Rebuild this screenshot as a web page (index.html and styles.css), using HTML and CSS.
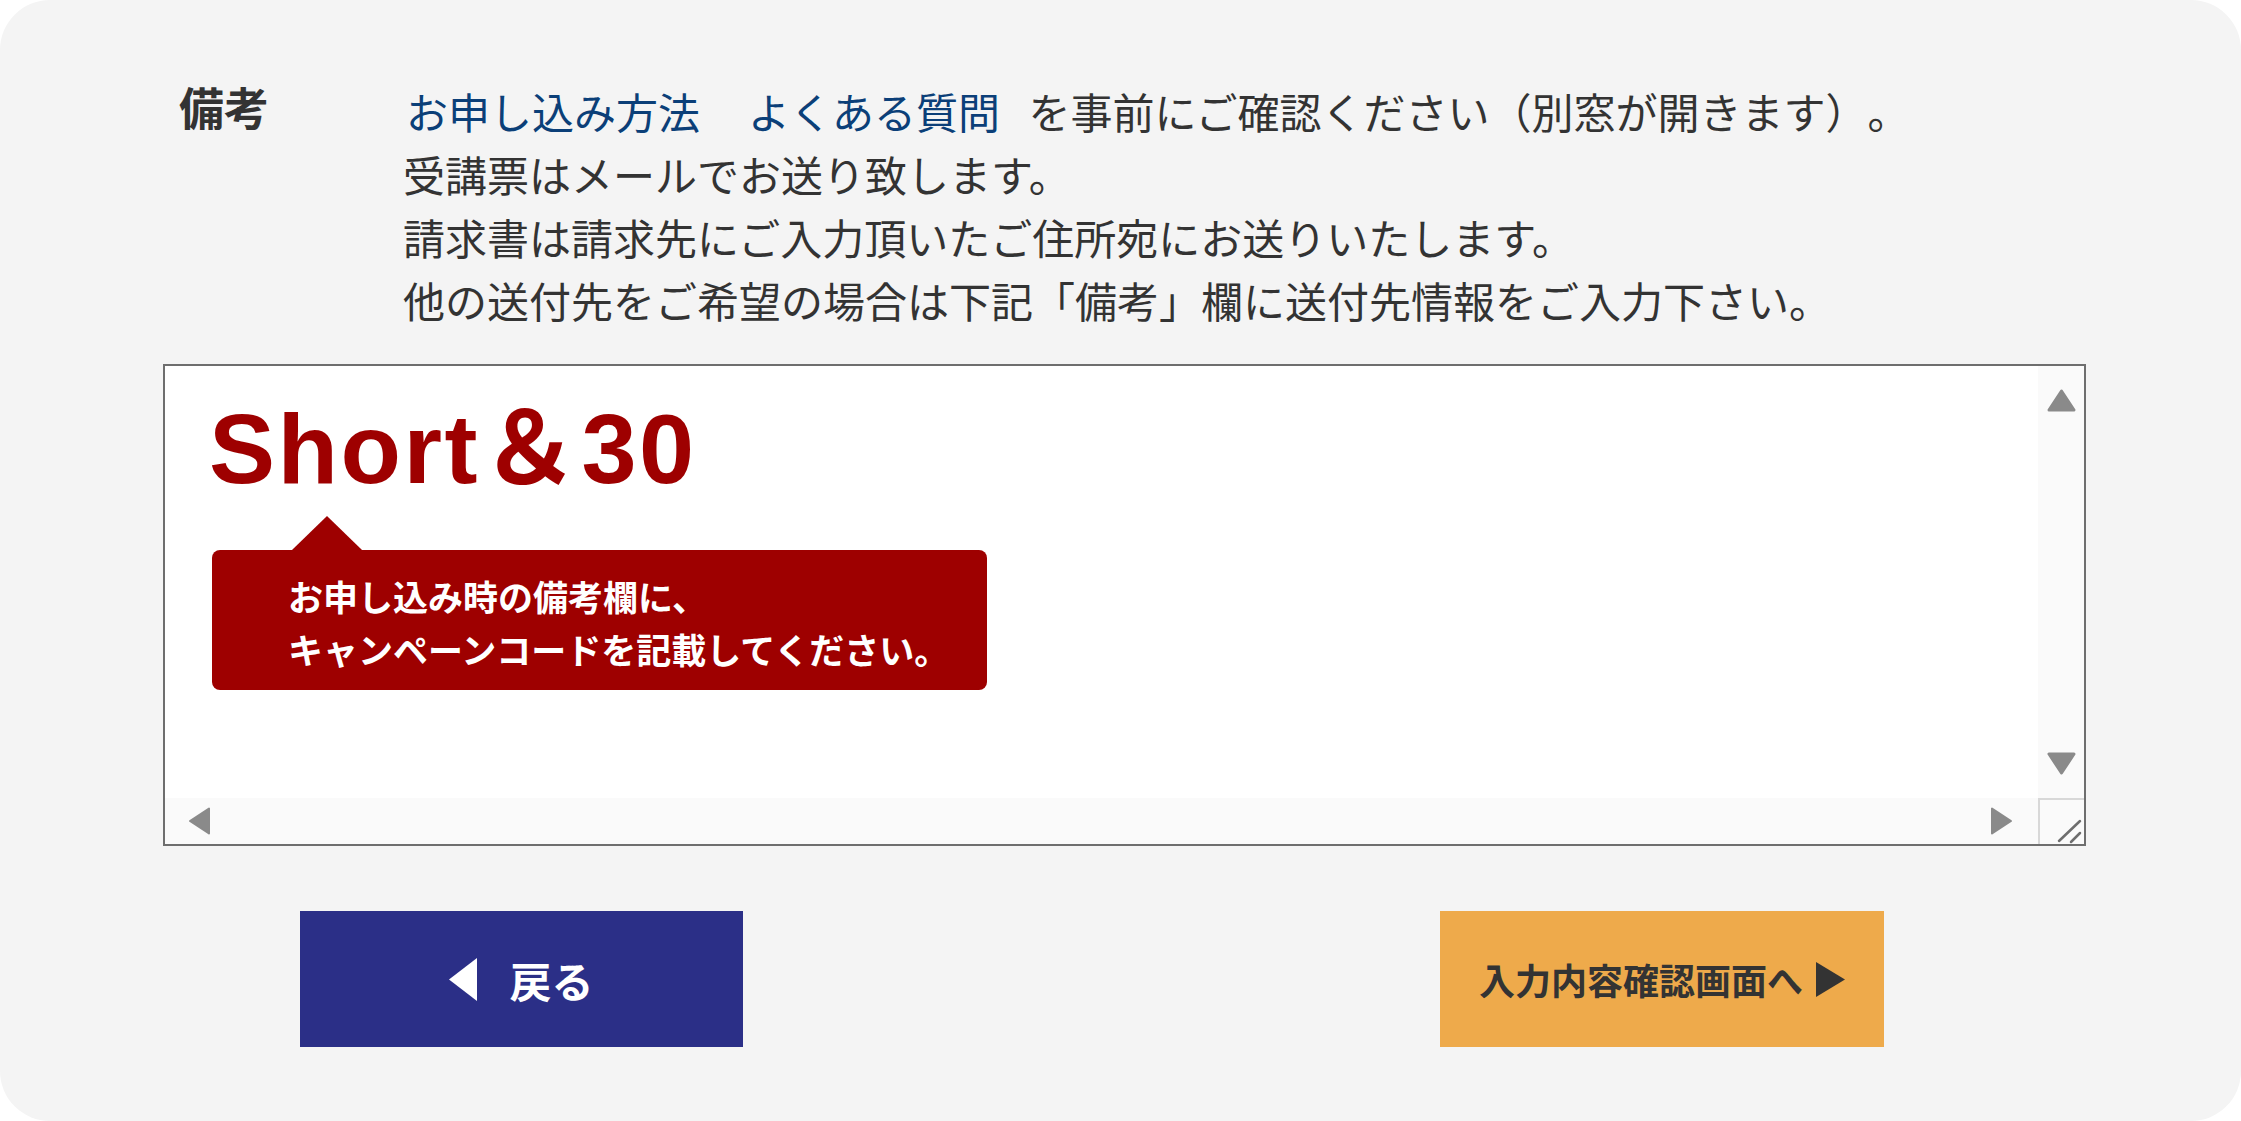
FILE: index.html
```html
<!DOCTYPE html>
<html lang="ja">
<head>
<meta charset="utf-8">
<title>備考</title>
<link rel="stylesheet" href="styles.css">
</head>
<body>
<div class="card">
  <div class="note-row">
    <div class="note-label">備考</div>
    <div class="note-text">
      <p><a class="link" href="#">お申し込み方法</a>　<a class="link link-last" href="#">よくある質問</a> を事前にご確認ください（別窓が開きます）。</p>
      <p>受講票はメールでお送り致します。</p>
      <p>請求書は請求先にご入力頂いたご住所宛にお送りいたします。</p>
      <p>他の送付先をご希望の場合は下記「備考」欄に送付先情報をご入力下さい。</p>
    </div>
  </div>

  <div class="memo-box">
    <div class="memo-content">
      <div class="campaign-title">Short＆30</div>
      <div class="tooltip">お申し込み時の備考欄に、<br>キャンペーンコードを記載してください。</div>
    </div>
    <div class="vscroll">
      <svg width="29" height="23" viewBox="0 0 29 23"><polygon points="14.5,2 27,21 2,21" fill="#8a8a8a" stroke="#8a8a8a" stroke-width="3" stroke-linejoin="round"/></svg>
      <svg width="29" height="23" viewBox="0 0 29 23"><polygon points="2,2 27,2 14.5,21" fill="#8a8a8a" stroke="#8a8a8a" stroke-width="3" stroke-linejoin="round"/></svg>
    </div>
    <div class="hscroll">
      <svg width="22" height="28" viewBox="0 0 22 28"><polygon points="2,14 21,1.5 21,26.5" fill="#8a8a8a" stroke="#8a8a8a" stroke-width="2" stroke-linejoin="round"/></svg>
      <svg width="22" height="28" viewBox="0 0 22 28"><polygon points="20,14 1,1.5 1,26.5" fill="#8a8a8a" stroke="#8a8a8a" stroke-width="2" stroke-linejoin="round"/></svg>
    </div>
    <div class="corner">
      <svg width="44" height="44" viewBox="0 0 44 44"><line x1="19" y1="41" x2="40" y2="21" stroke="#6e6e6e" stroke-width="2.5" stroke-linecap="round"/><line x1="31" y1="42" x2="40" y2="33" stroke="#6e6e6e" stroke-width="2.5" stroke-linecap="round"/></svg>
    </div>
  </div>

  <div class="actions">
    <a class="btn btn-back" href="#"><svg width="28" height="43" viewBox="0 0 28 43"><polygon points="0,21.5 28,0 28,43" fill="#ffffff"/></svg><span>戻る</span></a>
    <a class="btn btn-next" href="#"><span>入力内容確認画面へ</span><svg width="29" height="35" viewBox="0 0 29 35"><polygon points="0,0 29,17.5 0,35" fill="#333333"/></svg></a>
  </div>
</div>
</body>
</html>
```

FILE: styles.css
```css
html, body {
  margin: 0;
  padding: 0;
  background: #ffffff;
}

body {
  font-family: "Noto Sans CJK JP", "Noto Sans", sans-serif;
  color: #333333;
  text-spacing-trim: space-all;
}

.card {
  box-sizing: border-box;
  height: 1121px;
  background: #f4f4f4;
  border-radius: 50px;
  padding: 79px 155px 0 163px;
  overflow: hidden;
}

.note-row {
  display: flex;
}

.note-label {
  box-sizing: border-box;
  width: 240px;
  flex: none;
  padding-left: 16px;
  margin-top: -4px;
  font-size: 45px;
  font-weight: 700;
  line-height: 63px;
  color: #333333;
}

.note-text {
  font-size: 42px;
  line-height: 63px;
  color: #333333;
  white-space: nowrap;
}

.note-text p {
  margin: 0;
}

.link {
  color: #0b3f78;
  text-decoration: none;
  padding: 0 3px;
}

.link-last {
  padding-right: 19px;
}

.memo-box {
  box-sizing: border-box;
  margin-top: 33px;
  width: 1923px;
  height: 482px;
  border: 2px solid #6e6e6e;
  background: #ffffff;
  display: grid;
  grid-template-columns: 1fr 46px;
  grid-template-rows: 1fr 46px;
}

.memo-content {
  padding: 33px 0 0 47px;
}

.campaign-title {
  margin-left: -3px;
  font-family: "Liberation Sans", "Noto Sans CJK JP", sans-serif;
  font-size: 99px;
  line-height: 99px;
  font-weight: 700;
  letter-spacing: 2.5px;
  color: #9e0000;
}

.tooltip {
  position: relative;
  box-sizing: border-box;
  margin-top: 52px;
  width: 775px;
  padding: 19px 0 15px 76px;
  background: #9e0000;
  color: #ffffff;
  font-size: 35px;
  font-weight: 700;
  line-height: 53px;
  border-radius: 8px;
  white-space: nowrap;
}

.tooltip::before {
  content: "";
  position: absolute;
  left: 80px;
  top: -34px;
  border-left: 35px solid transparent;
  border-right: 35px solid transparent;
  border-bottom: 34px solid #9e0000;
}

.vscroll {
  background: #fafafa;
  display: flex;
  flex-direction: column;
  justify-content: space-between;
  align-items: center;
  padding: 23px 0;
}

.vscroll svg,
.hscroll svg,
.corner svg,
.btn svg {
  display: block;
}

.hscroll {
  background: #fafafa;
  display: flex;
  justify-content: space-between;
  align-items: center;
  padding: 0 25px 0 23px;
}

.corner {
  box-sizing: border-box;
  background: #fafafa;
  border-top: 2px solid #d8d8d8;
  border-left: 2px solid #d8d8d8;
}

.actions {
  box-sizing: border-box;
  width: 1923px;
  margin-top: 65px;
  padding: 0 202px 0 137px;
  display: flex;
  justify-content: space-between;
}

.btn {
  display: flex;
  align-items: center;
  justify-content: center;
  height: 136px;
  width: 443px;
  text-decoration: none;
  font-weight: 700;
}

.btn-back {
  background: #2b2f87;
  color: #ffffff;
  font-size: 42px;
  gap: 32px;
}

.btn-next {
  width: 444px;
  background: #eeaa4b;
  color: #333333;
  font-size: 36px;
  gap: 13px;
}
```
